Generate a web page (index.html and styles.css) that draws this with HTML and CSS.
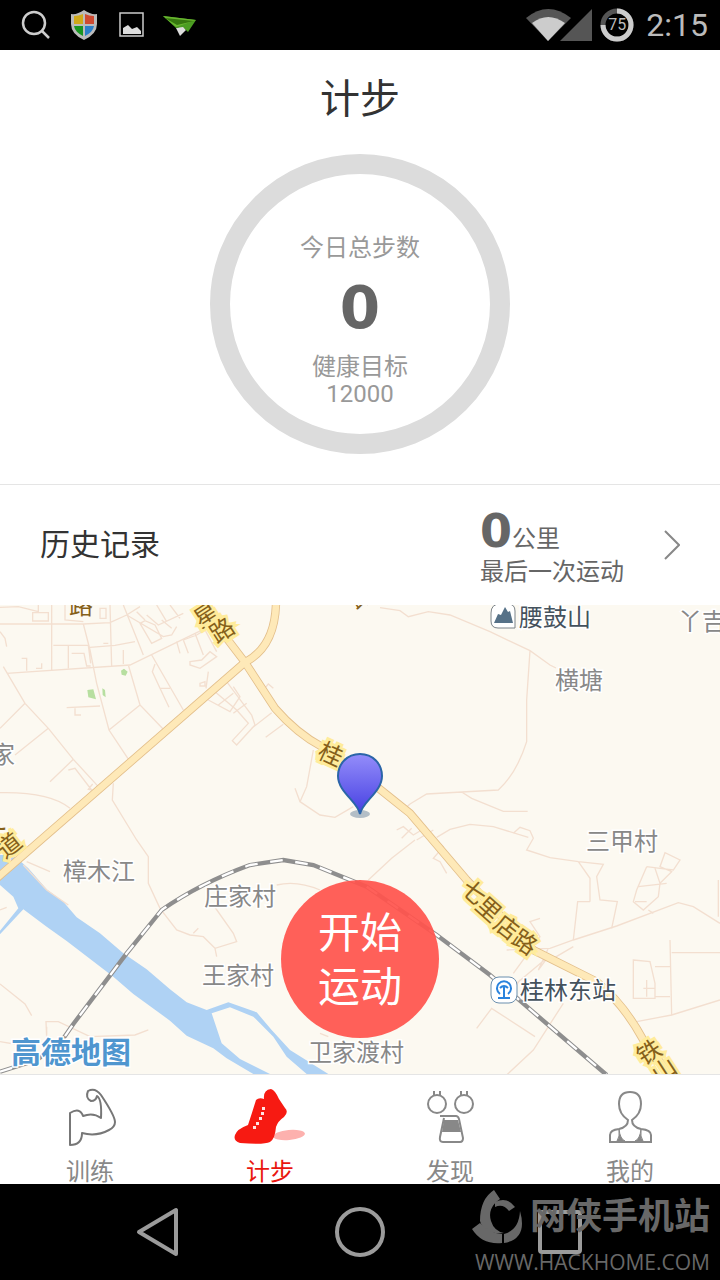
FILE: index.html
```html
<!DOCTYPE html>
<html lang="zh-CN">
<head>
  <meta charset="UTF-8" />
  <meta name="viewport" content="width=device-width, initial-scale=1.0"/>
  <title>计步</title>
  <link rel="stylesheet" href="styles.css">
</head>
<body>
  <div class="status-bar">
    <div class="status-left">
      <svg width="48" height="50" viewBox="0 0 48 50"><g fill="none" stroke="#ccc" stroke-width="2.5"><circle cx="22" cy="23" r="11"/><path d="M30 31l7 7"/></g></svg>
      <svg width="48" height="50" viewBox="0 0 48 50">
        <path d="M24 10q7 5 13 4v10q0 10-13 16q-13-6-13-16V14q6 1 13-4z" fill="#bbb"/>
        <path d="M23 14v10h-9v-8q5 0 9-2z" fill="#d0a91a"/>
        <path d="M25 14v10h9v-8q-5 0-9-2z" fill="#cf4a31"/>
        <path d="M14 26h9v10q-8-4-9-10z" fill="#18951f"/>
        <path d="M34 26h-9v10q8-4 9-10z" fill="#2c7fc9"/>
      </svg>
      <svg width="48" height="50" viewBox="0 0 48 50"><path d="M12 13h23v23H12z" fill="none" stroke="#ccc" stroke-width="1.5"/><path d="M15 34v-6l5-3 4 4 5-2 4 4v3z" fill="#ddd"/></svg>
      <svg width="48" height="50" viewBox="0 0 48 50"><path d="M20 28l7-2 3 4-6 6z" fill="#ddd"/><path d="M7 16l33 4-8 12-5-5-7 1z" fill="#4b9d22"/><path d="M7 16l33 4-20 7z" fill="#69b62f"/><path d="M9 18l29 3-17 4z" fill="#36770f"/></svg>
    </div>
    <div class="status-right">
      <svg width="66" height="50" viewBox="0 0 66 50"><path d="M0 18q22-18 45 0L22 41z" fill="#555"/><path d="M6 23q16-12 33 0L22 41z" fill="#ccc"/><path d="M34 41h32V9z" fill="#555"/></svg>
      <div class="battery">
        <svg width="34" height="34" viewBox="0 0 34 34"><circle cx="17" cy="17" r="14" fill="none" stroke="#555" stroke-width="5"/><path d="M17 3a14 14 0 1 1-14 14" fill="none" stroke="#ccc" stroke-width="5"/></svg>
        <span>75</span>
      </div>
      <time>2:15</time>
    </div>
  </div>

  <header class="steps">
    <h1>计步</h1>
    <div class="ring">
      <div class="ring-label">今日总步数</div>
      <div class="ring-count">0</div>
      <div class="ring-goal">健康目标<br>12000</div>
    </div>
  </header>

  <a class="history" href="#history">
    <span class="history-title">历史记录</span>
    <span class="history-info">
      <span class="distance"><b>0</b>公里</span>
      <span class="last-run">最后一次运动</span>
    </span>
    <svg width="16" height="30" viewBox="0 0 16 30"><path d="M1 1l14 14L1 29" fill="none" stroke="#888" stroke-width="2"/></svg>
  </a>

  <main class="map">
    <svg class="map-canvas" viewBox="0 0 720 469" preserveAspectRatio="xMidYMid slice">
      <!-- map tiles are drawn at three units to the pixel -->
      <g transform="translate(0 -5) scale(0.33333)" fill="none">
        <g class="water">
          <path d="M0 765L40 765L85 805L140 868L190 905L230 952L300 1000L370 1060L440 1108L510 1168L560 1207L620 1230L685 1207L770 1237L815 1290L870 1350L985 1422L920 1422L860 1370L820 1310L760 1250L690 1222L635 1240L665 1330L720 1377L810 1422L760 1422L680 1375L640 1345L560 1307L510 1262L400 1182L340 1130L200 1023L140 980L70 928L0 1003L0 992L55 925L40 890L0 855z"/>
        </g>
        <g class="lane">
          <path d="M0 72H250L330 68L380 45L420 20M155 15V212M20 220L390 195L610 88M10 200L75 310L145 385L220 478L295 560M75 310L0 385M145 385L45 465M220 478L150 545M250 72L270 150L290 250L327 390L388 482M160 136H265L272 190M270 142L345 136L405 125M330 15L335 200M370 15L430 165M205 136V205M370 150V192M385 195L420 315L490 388M327 390L420 315M455 165L550 330M465 192L457 215L480 265L507 322M480 265H510M200 323L300 318M225 325V345H243"/>
          <path d="M0 22L55 20L115 35V15M98 38H145V63H98zM195 15V60L250 65M300 25H318V55H300zM0 95L15 115L20 140M65 175H80V212M108 205H125V190M215 160H252L260 198H272M310 130H325M420 70L455 130L485 115L465 75L435 62zM380 45L490 110L515 105L530 80M485 60L515 85M440 45L475 75L550 40M410 35L435 60M470 15L500 65M510 15L540 55M530 125L540 160M550 120L565 160M585 100L610 165M550 120L590 105L615 90L650 155"/>
          <path d="M570 185L605 180L630 155L650 170L600 205L570 195zM625 215L618 265M600 250L615 245V258H600zM660 265L680 245L755 345L765 375L710 435L697 422L745 370L710 330L645 275M625 300L690 335L720 290L700 260M655 315L700 280M700 340L740 310M755 385L815 338M797 412L850 373M790 270L805 252L820 265M205 510L225 505L275 570L265 568L278 552"/>
          <path d="M940 450L920 560L900 605L960 645L1005 652L1060 620M885 565L900 605M0 578Q150 575 210 625M340 550L337 600L410 720L445 770V850L480 925L530 990L570 1005L610 1010L645 1045L710 1025L700 1000L640 915M645 1045L650 1070M580 1000L595 985M80 785L150 815M70 795L140 870L205 915M0 930L20 922"/>
          <path d="M0 1152L75 1212L95 1247M140 1312L138 1265L175 1265L270 1310L405 1305L445 1290M140 1310V1280M0 1325L60 1335M830 855Q890 840 960 870M960 1300L985 1310"/>
          <path d="M1140 23L1200 32L1225 50L1285 35L1350 45L1470 95L1590 152L1650 195L1668 204M1590 152L1580 300V425Q1550 520 1495 570L1385 576L1280 582L1230 612M1385 576L1415 595L1510 634H1583M1230 612L1205 635M1310 712L1350 688L1410 673L1480 680L1585 712M1540 700L1560 682L1590 692L1600 715L1580 750L1650 773L1735 785L1810 793L1790 830L1800 900L1852 905L1835 985M1735 785L1770 835V905M1770 905H1733L1720 1020M1190 690L1210 680L1240 705L1265 690M1205 715L1235 685M1250 720L1300 690"/>
          <path d="M1105 840L1175 775L1245 720M1340 820L1320 785L1300 775L1330 740L1310 720M1520 1050L1650 1045L1720 1020L1850 978L2035 908L2080 920L2160 970M2155 840V950M1645 1045L1615 1110L1645 1070L1550 1150M1540 1120L1620 1010L1590 965L1620 955M1660 1075L1720 1040M1940 800L1980 805L2020 810L2040 780L1995 758L1980 800L2015 815L1980 850M1940 800L1910 870L1900 905L1930 930L1975 890L1980 850L1965 805M1915 860L2000 850M1945 930L1960 940M1905 905H1940M2010 1020L2015 1245L2160 1200M2015 1058H2160M2015 1245L1910 1265M1900 1080L1950 1085L1965 1150V1195H1900zM1965 1100H2010M1965 1190H2010M1940 1140V1190M1930 1165H1965M1430 1285L1475 1225L1605 1310M1690 1210L1600 1350L1520 1425M1560 1140L1530 1180"/>
        </g>
        <g class="park"><path d="M262 270L280 268L288 298L265 292zM307 265L315 270L317 292L308 285zM363 212L372 206L383 215L377 227L365 224z"/></g>
        <g class="road-edge">
          <path d="M-10 835L735 187Q825 140 828 10M595 15L680 115L735 187L825 325Q890 400 965 440L1130 560L1230 640L1400 840L1600 1050L1790 1145Q1870 1210 1930 1320L2010 1425"/>
        </g>
        <g class="road">
          <path d="M-10 835L735 187Q825 140 828 10M595 15L680 115L735 187L825 325Q890 400 965 440L1130 560L1230 640L1400 840L1600 1050L1790 1145Q1870 1210 1930 1320L2010 1425"/>
        </g>
        <path class="rail" d="M0 1415L110 1380L180 1330L220 1272L380 1060L485 930Q600 850 750 795L850 780L940 795L1100 860L1310 1005L1470 1125L1820 1425"/>
        <path class="rail-gap" d="M0 1415L110 1380L180 1330L220 1272L380 1060L485 930Q600 850 750 795L850 780L940 795L1100 860L1310 1005L1470 1125L1820 1425"/>
      </g>

      <g class="road-name">
        <text class="minor" x="81" y="9">路</text>
        <text transform="translate(206 10) rotate(-33)" y="9">星</text>
        <text transform="translate(222 25) rotate(-33)" y="9">路</text>
        <text transform="translate(331 149) rotate(25)" y="9">桂</text>
        <text transform="translate(474 287) rotate(42)" y="9">七</text>
        <text transform="translate(489 304) rotate(42)" y="9">里</text>
        <text transform="translate(507 322) rotate(38)" y="9">店</text>
        <text transform="translate(525 337) rotate(35)" y="9">路</text>
        <text transform="translate(649 447) rotate(-33)" y="9">铁</text>
        <text transform="translate(664 465) rotate(-33)" y="9">山</text>
        <text transform="translate(9 240) rotate(-38)" y="9">道</text>
        <text class="minor" transform="translate(-9 222) rotate(-38)" y="9">大</text>
        <text class="minor" transform="translate(362 -9) rotate(-30)" y="9">路</text>
      </g>
      <g class="place">
        <text x="-9" y="158">家</text>
        <text x="63" y="275">樟木江</text>
        <text x="204" y="300">庄家村</text>
        <text x="202" y="379">王家村</text>
        <text x="308" y="456">卫家渡村</text>
        <text x="586" y="245">三甲村</text>
        <text x="555" y="84">横塘</text>
        <text x="678" y="25">丫吉</text>
      </g>
      <g class="place poi">
        <text x="519" y="21">腰鼓山</text>
        <text x="520" y="394">桂林东站</text>
      </g>

      <path d="M500 -1h8q7 0 7 7v17h-17q-7 0-7-7v-8q0-9 9-9z" fill="#fff" stroke="#7b8288"/>
      <path d="M494 18l4-9 3 1 4-8 3 5 2-1 3 12z" fill="#567187"/>
      <rect x="491" y="372" width="26" height="26" rx="8" fill="#fff" stroke="#6b8fae"/>
      <path d="M500 389a7 7 0 1 1 8 0M500 383q4-4 8 0M504 382v10M498 393h12" fill="none" stroke="#2a83dd" stroke-width="2"/>

      <text class="map-logo" x="11" y="458">高德地图</text>

      <defs>
        <linearGradient id="pin" x1="0" y1="0" x2="0" y2="1">
          <stop offset="0" stop-color="#948dfa"/>
          <stop offset="1" stop-color="#4640e2"/>
        </linearGradient>
      </defs>
      <ellipse cx="360" cy="209" rx="10" ry="4" fill="#b3bec6"/>
      <path d="M360 149c13 0 22 10 22 22 0 16-20 26-22 38-2-12-22-22-22-38 0-12 9-22 22-22z" fill="url(#pin)" stroke="#2b65a8" stroke-width="2"/>
    </svg>
    <button class="start-button">开始<br>运动</button>
  </main>

  <nav class="tabs">
    <a class="tab" href="#train">
      <svg width="80" height="64" viewBox="0 0 80 64"><path d="M20 30v32q12 0 12-12q14 4 27-3q6-3 6-8q0-6-14-27q-6-8-13-4q-3 7 3 10q5 0 6-5q5 3 4 22q-8-6-18-2q-3-9-13-3z" fill="none" stroke="#777" stroke-width="2" stroke-linejoin="round"/></svg>
      训练
    </a>
    <a class="tab active" href="#steps">
      <svg width="80" height="64" viewBox="0 0 80 64"><ellipse cx="59" cy="52" rx="16" ry="5" transform="rotate(-5 59 52)" fill="#fdb1ae"/><path d="M26 17q3-3 8-1q-1-9 7-10q4 1 8 10l6 9q4 4-1 9q-6 4-8 10q-1 12-6 15q-6 3-30 1q-7-2-5-8q2-6 13-10q4-12 8-25z" fill="#f71a12"/><path d="M32 24h3v3h-3zM31 29h3v3h-3zM29 34h3v3h-3zM26 39h3v3h-3zM23 43h3v3h-3z" fill="#ffe5e3"/></svg>
      计步
    </a>
    <a class="tab" href="#discover">
      <svg width="80" height="64" viewBox="0 0 80 64"><g fill="none" stroke="#888" stroke-width="2"><circle cx="27" cy="21" r="9"/><circle cx="54" cy="21" r="9"/><path d="M24 8v4M30 8v4M51 8v4M57 8v4M30 33h16q2 0 3 3l4 19q0 4-3 4H33q-4 0-3-5l4-19"/></g><path d="M34 37h14l3 12H32z" fill="#888"/></svg>
      发现
    </a>
    <a class="tab" href="#me">
      <svg width="80" height="64" viewBox="0 0 80 64"><path d="M38 37q-9-6-9-16q0-12 11-12t11 12q0 10-9 16q0 7 9 9q10 1 10 6v7H20v-7q0-5 9-6q9-2 9-9z" fill="none" stroke="#888" stroke-width="2"/><path d="M29 46q1 10 6 12h-8q3-4 2-12zM51 46q-1 10-6 12h8q-3-4-2-12z" fill="#888" stroke="#888"/></svg>
      我的
    </a>
  </nav>

  <div class="system-nav">
    <button aria-label="返回"><svg width="60" height="60" viewBox="0 0 60 60"><path d="M9 30l37-22v44z" fill="none" stroke="#9b9b9b" stroke-width="4" stroke-linejoin="round"/></svg></button>
    <button aria-label="主页"><svg width="60" height="60" viewBox="0 0 60 60"><circle cx="30" cy="30" r="23" fill="none" stroke="#9b9b9b" stroke-width="4"/></svg></button>
    <button aria-label="最近任务"><svg width="60" height="60" viewBox="0 0 60 60"><rect x="10" y="10" width="40" height="40" rx="2" fill="none" stroke="#9b9b9b" stroke-width="4"/></svg></button>
    <div class="watermark">
      <div class="watermark-name">
        <svg width="54" height="56" viewBox="0 0 54 56"><g fill="#686868"><path d="M22 1l6 9q-13 9-9 22q3 10 13 12q-20 2-24-12Q8 10 22 1z"/><path d="M0 40l8-6q9 10 22 11v9Q10 56 0 40z"/><path d="M32 45q15-4 16-23q8 28-16 32z"/><path d="M23 13q12-6 20 5l-6 4q-6-8-14-4z"/></g></svg>
        网侠手机站
      </div>
      <div class="watermark-url">WWW.HACKHOME.COM</div>
    </div>
  </div>
</body>
</html>
```
FILE: styles.css
```css
* {
  box-sizing: border-box;
}
body {
  margin: 0;
  min-height: 100vh;
  display: flex;
  flex-direction: column;
  background: #fff;
  color: #666;
  font-family: Roboto, "Noto Sans CJK SC", sans-serif;
  font-size: 24px;
  line-height: 28px;
}
svg {
  display: block;
  flex: none;
}
a {
  color: inherit;
  text-decoration: none;
}
button {
  padding: 0;
  border: none;
  background: none;
  font-family: inherit;
  cursor: pointer;
}

/* phone status bar */
.status-bar {
  height: 50px;
  padding: 0 12px;
  display: flex;
  justify-content: space-between;
  background: #000;
  color: #bbb;
}
.status-left, .status-right {
  display: flex;
  align-items: center;
}
.status-right {
  gap: 8px;
}
.battery {
  position: relative;
}
.battery span {
  position: absolute;
  inset: 0;
  font-size: 16px;
  line-height: 34px;
  text-align: center;
}
.status-right time {
  padding-left: 4px;
  font-size: 32px;
}

/* step counter */
.steps {
  display: flex;
  flex-direction: column;
  align-items: center;
  gap: 24px;
  padding: 20px 0 30px;
  border-bottom: 1px solid #e5e5e5;
}
h1 {
  margin: 0;
  color: #333;
  font-size: 40px;
  font-weight: normal;
  line-height: 60px;
}
.ring {
  width: 300px;
  height: 300px;
  padding-top: 60px;
  border: 20px solid #dcdcdc;
  border-radius: 50%;
  text-align: center;
  color: #999;
}
.ring-count, .distance b {
  color: #666;
  font-family: "DejaVu Sans", sans-serif;
  font-weight: bold;
}
.ring-count {
  margin: 12px 0;
  font-size: 58px;
  line-height: 68px;
}
.ring-goal {
  line-height: 27px;
}

/* history row */
.history {
  height: 120px;
  padding: 0 40px;
  display: flex;
  align-items: center;
}
.history-title {
  flex: 1;
  color: #333;
  font-size: 30px;
}
.history-info {
  width: 184px;
  display: flex;
  flex-direction: column;
}
.distance {
  display: flex;
  align-items: baseline;
}
.distance b {
  font-size: 46px;
  line-height: 54px;
}

/* map */
.map {
  position: relative;
  flex: 1;
  min-height: 469px;
  background: #fcf9f1;
}
.map-canvas {
  position: absolute;
  width: 100%;
  height: 100%;
}
.water {
  fill: #afd2f4;
}
.park {
  fill: #b7dfa0;
}
.lane {
  stroke: #f3dfd0;
  stroke-width: 4;
}
.road-edge {
  stroke: #e3bf8b;
  stroke-width: 25;
}
.road {
  stroke: #fee9b8;
  stroke-width: 20;
}
.rail {
  stroke: #8e8e8e;
  stroke-width: 13;
}
.rail-gap {
  stroke: #fff;
  stroke-width: 7;
  stroke-dasharray: 38 38;
}
.place text, .road-name text {
  font-size: 24px;
  paint-order: stroke;
  stroke: #fff;
  stroke-width: 3px;
  fill: #888;
}
.poi text {
  fill: #45525d;
}
.road-name text {
  text-anchor: middle;
  fill: #85601a;
  stroke: #ffec9b;
  stroke-width: 6px;
}
.road-name .minor {
  stroke: #fcf9f1;
}
.map-logo {
  font-size: 30px;
  font-weight: bold;
  fill: #4f96cf;
  stroke: #fff;
  stroke-width: 3px;
  paint-order: stroke;
}
.start-button {
  position: absolute;
  left: 50%;
  bottom: 36px;
  width: 158px;
  height: 158px;
  padding-top: 4px;
  transform: translateX(-50%);
  border-radius: 50%;
  background: rgba(255, 84, 78, 0.93);
  color: #fff;
  font-size: 42px;
  line-height: 54px;
}

/* bottom tabs */
.tabs {
  height: 110px;
  display: flex;
  border-top: 1px solid #e5e5e5;
}
.tab {
  flex: 1;
  display: flex;
  flex-direction: column;
  align-items: center;
  gap: 10px;
  padding-top: 8px;
  color: #888;
  line-height: 30px;
}
.tab.active {
  color: #e9160f;
}

/* system buttons */
.system-nav {
  position: relative;
  height: 96px;
  display: flex;
  justify-content: center;
  align-items: center;
  gap: 140px;
  background: #000;
}
.watermark {
  position: absolute;
  right: 10px;
  top: 5px;
  color: #686868;
  pointer-events: none;
}
.watermark-name {
  display: flex;
  align-items: center;
  justify-content: flex-end;
  gap: 4px;
  font-size: 36px;
  font-weight: bold;
  line-height: 56px;
}
.watermark-url {
  font-family: "Open Sans", sans-serif;
  font-size: 21px;
  font-weight: 500;
  line-height: 34px;
  text-align: right;
}
```
